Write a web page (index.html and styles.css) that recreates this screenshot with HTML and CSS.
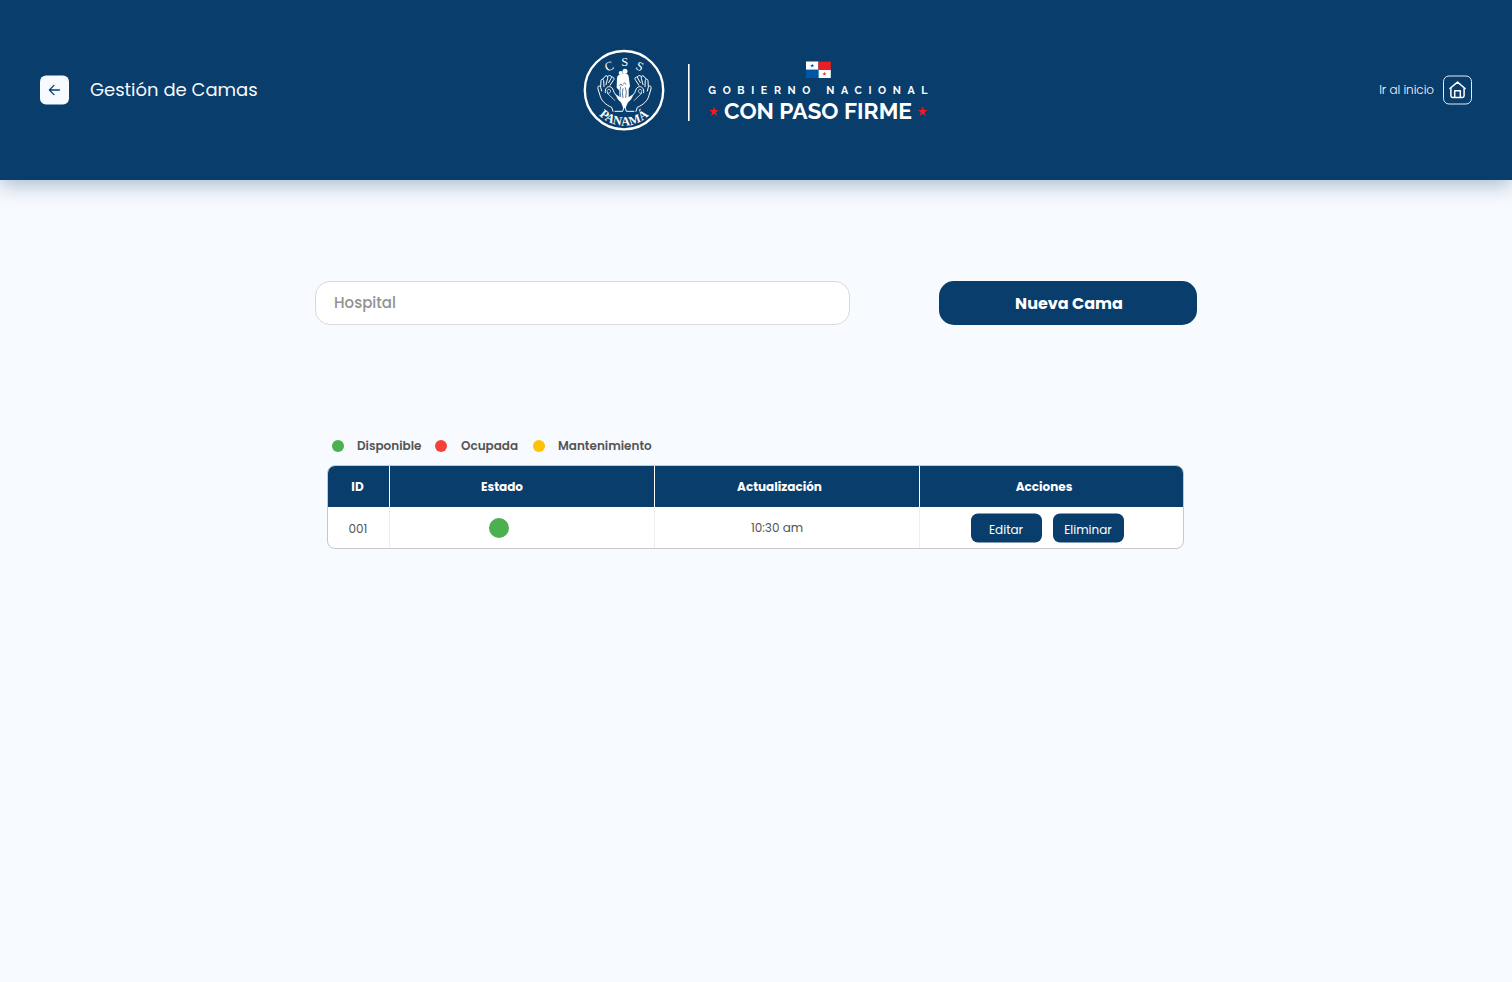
FILE: index.html
```html
<!DOCTYPE html>
<html lang="es">
<head>
<meta charset="utf-8">
<title>Gestión de Camas</title>
<link rel="stylesheet" href="styles.css">
</head>
<body>
<header class="header">
  <div class="header-left">
    <button class="back" aria-label="Volver">
      <svg width="15" height="15" viewBox="0 0 15 15" fill="none" stroke="#093d6b" stroke-width="1.3" stroke-linecap="round" stroke-linejoin="round"><path d="M12.4 7.5H2.7M7 2.9L2.4 7.5L7 12.1"/></svg>
    </button>
    <h1 class="title">Gestión de Camas</h1>
  </div>
  <svg class="logo" width="348" height="84" viewBox="0 0 348 84">
    <defs><path id="arc" d="M6.5 42A35.5 35.5 0 0 0 77.5 42"/></defs>
    <circle cx="42" cy="42.2" r="39.2" fill="none" stroke="#fff" stroke-width="2.4"/>
    <g class="seal-text">
      <text text-anchor="middle" transform="translate(28.8 22) rotate(-24)">C</text>
      <text text-anchor="middle" transform="translate(42.6 17.8)">S</text>
      <text text-anchor="middle" transform="translate(56.2 22.2) rotate(24)">S</text>
      <text class="seal-name"><textPath href="#arc" startOffset="28" textLength="55">PANAMÁ</textPath></text>
    </g>
    <g transform="translate(-7 -8) scale(.3333)" fill="none" stroke="#fff" stroke-width="3" stroke-linecap="round" stroke-linejoin="round">
      <g id="hand">
        <path d="M114 214L110 202C93 195 78 182 75 166L69 147C67 138 73 134 77 142L80 153"/>
        <path d="M77 140L78 122C79 116 85 116 86 122L87 140M84 117L90 109C95 105 100 109 98 115L93 134M98 109C105 104 111 108 109 114L101 128M110 111C117 110 119 116 115 121L105 136"/>
        <path d="M91 158C89 145 98 137 107 141C116 144 114 156 122 164C133 172 145 184 148 197L143 214H120"/>
        <path d="M98 160C107 161 110 151 103 148C97 147 95 154 98 160C103 168 112 172 119 181" stroke-width="2.2"/>
      </g>
      <use href="#hand" transform="translate(297 0) scale(-1 1)"/>
      <path d="M122 164L136 172L148 175L161 172L175 164L168 178L158 188L151 204H145L139 188L129 178Z" fill="#fff" stroke-width="1"/>
      <circle cx="137" cy="99" r="6" fill="#fff" stroke="none"/><circle cx="150" cy="94" r="7.5" fill="#fff" stroke="none"/>
      <path d="M126 113Q128 103 137 104L144 100Q158 98 161 109L165 139L161 147L161 173L148 178L134 173L132 151L125 143Z" fill="#fff" stroke="none"/>
      <path d="M137 141L135 151L137 170M144 146L142 158L144 173M151 143L154 155L152 173" stroke="#093d6b" stroke-width="2"/>
      <path d="M134 136Q138 128 142 137M145 132Q149 125 153 132" stroke="#093d6b" stroke-width="2.2"/>
    </g>
    <rect x="106" y="16" width="1.6" height="57" fill="#fff"/>
    <g transform="translate(224 13.6)">
      <path d="M0 0H12.4V8.2H0ZM12.4 8.2H24.8V16.4H12.4Z" fill="#fff"/>
      <path d="M12.4 0H24.8V8.2H12.4Z" fill="#ee1c25"/>
      <path d="M0 8.2H12.4V16.4H0Z" fill="#0056a5"/>
      <path d="M6.2 2L6.7 3.4H8.3L7 4.3L7.5 5.8L6.2 4.9L4.9 5.8L5.4 4.3L4.1 3.4H5.7Z" fill="#0056a5"/>
      <path transform="translate(12.2 8.2)" d="M6.2 2L6.7 3.4H8.3L7 4.3L7.5 5.8L6.2 4.9L4.9 5.8L5.4 4.3L4.1 3.4H5.7Z" fill="#ee1c25"/>
    </g>
    <text class="gov" x="126.3" y="46.2" textLength="226">GOBIERNO NACIONAL</text>
    <text class="motto" x="142" y="70.9" textLength="188" lengthAdjust="spacingAndGlyphs">CON PASO FIRME</text>
    <path d="M132 58.2L133.2 62H136.9L133.9 64.3L135 68L132 65.7L129 68L130.1 64.3L127.1 62H130.8ZM340.7 58.2L341.9 62H345.6L342.6 64.3L343.7 68L340.7 65.7L337.7 68L338.8 64.3L335.8 62H339.5Z" fill="#ee1c25"/>
  </svg>
  <div class="header-right">
    <span class="home-label">Ir al inicio</span>
    <button class="home" aria-label="Inicio">
      <svg width="19" height="19" viewBox="0 0 19 19" fill="none" stroke="#fff" stroke-width="1.5" stroke-linecap="round" stroke-linejoin="round"><path d="M1.9 8L9.5 1.6L17.1 8M2.9 7.4V15.3Q2.9 17 4.6 17H14.4Q16.1 17 16.1 15.3V7.4M6.7 17V10.2H12.3V17"/></svg>
    </button>
  </div>
</header>
<main class="main">
  <div class="toolbar">
    <input class="search" placeholder="Hospital">
    <button class="new">Nueva Cama</button>
  </div>
  <section class="beds">
    <ul class="legend">
      <li><i class="dot green"></i><span>Disponible</span></li>
      <li><i class="dot red"></i><span>Ocupada</span></li>
      <li><i class="dot yellow"></i><span>Mantenimiento</span></li>
    </ul>
    <div class="table">
      <div class="row head">
        <div class="cell c-id">ID</div>
        <div class="cell c-state">Estado</div>
        <div class="cell c-upd">Actualización</div>
        <div class="cell c-act">Acciones</div>
      </div>
      <div class="row body">
        <div class="cell c-num">001</div>
        <div class="cell c-dot"><i class="dot big green"></i></div>
        <div class="cell c-time">10:30 am</div>
        <div class="cell c-btns"><button class="action">Editar</button><button class="action">Eliminar</button></div>
      </div>
    </div>
  </section>
</main>
</body>
</html>
```
FILE: styles.css
```css
* { box-sizing: border-box; }
body {
  margin: 0; min-height: 982px; background: #f7faff;
  font-family: Poppins, Inter, "Open Sans", sans-serif;
  color: #555;
}
button { font: inherit; border: 0; padding: 0; margin: 0; display: flex; align-items: center; justify-content: center; }
span, h1 { white-space: nowrap; }
.header {
  height: 180px; padding: 0 40px; background: #093d6b; color: #fff;
  display: grid; grid-template-columns: 1fr 348px 1fr; align-items: center;
  box-shadow: 0 4px 20px rgba(9, 61, 107, .36);
}
.header-left { display: flex; align-items: center; gap: 21px; }
.back { width: 29px; height: 29px; border-radius: 6px; background: #f7faff; transform: translateY(-.5px); }
.title { margin: 0; font-size: 18px; font-weight: 400; line-height: 28px; color: #f7faff; }
.logo { display: block; overflow: visible; }
.seal-text { font: 12.5px "Liberation Serif", serif; fill: #fff; }
.seal-name { font-weight: 700; font-size: 12.5px; }
.gov { font: 700 11px Raleway, Lato, sans-serif; fill: #fff; }
.gov { transform: translate(126.3px, 0) scaleX(.97) translate(-126.3px, 0); }
.motto { font: 700 22.5px Raleway, Lato, sans-serif; fill: #fff; }
.header-right { display: flex; align-items: center; justify-content: flex-end; gap: 9px; }
.home-label { font-size: 12px; font-weight: 300; letter-spacing: -.05px; color: #f7faff; }
.home { width: 29px; height: 29px; border: 1px solid #e5ebf2; border-radius: 6px; background: none; transform: translateY(-.5px); }
.main { width: 882px; margin: 101px auto 0; }
.toolbar { display: flex; justify-content: space-between; }
.search {
  width: 535px; height: 44px; padding: 0 18px 1px; border: 1px solid #d9d9d9; border-radius: 15px;
  background: #fff; font: 500 15px Poppins, Inter, sans-serif;
}
.search::placeholder { color: #929292; opacity: 1; }
.new { width: 258px; height: 44px; padding-left: 2px; border-radius: 15px; background: #093d6b; color: #fff; font-size: 16px; font-weight: 700; }
.beds { width: 857px; margin: 112px 0 0 12px; }
.legend { margin: 0; padding: 0 0 0 5px; height: 18px; list-style: none; display: flex; font-size: 12px; font-weight: 600; }
.legend li { display: flex; align-items: center; gap: 13px; }
.legend li:nth-child(1) { width: 103px; }
.legend li:nth-child(2) { width: 98px; gap: 14px; }
.dot { width: 12px; height: 12px; border-radius: 50%; flex: none; }
.green { background: #4caf50; }
.red { background: #f44336; }
.yellow { background: #ffc107; }
.big { width: 20px; height: 20px; }
.table { margin-top: 10px; height: 84px; border: 1px solid #c8c8c8; border-radius: 8px; background: #fff; overflow: hidden; }
.row { display: grid; grid-template-columns: 62px 265px 265px 1fr; height: 41px; font-size: 12px; }
.cell { display: flex; align-items: center; justify-content: center; border-right: 1px solid #eee; }
.cell:last-child { border-right: 0; }
.head { background: #093d6b; color: #fff; font-weight: 700; }
.head .cell { border-color: #fff; }
.c-id, .c-num { padding-right: 2px; }
.c-num { padding: 2px 1px 0 0; }
.c-state { padding-right: 40px; }
.c-upd { padding-right: 15px; }
.c-act { padding-right: 15px; }
.c-dot { padding-right: 46px; }
.c-time { padding-right: 20px; }
.c-btns { gap: 11px; padding: 0 8px 0 0; }
.action { width: 71px; height: 29px; border-radius: 7px; background: #093d6b; color: #fff; padding: 2px 1px 0 0; transform: translateY(.5px); }
```
